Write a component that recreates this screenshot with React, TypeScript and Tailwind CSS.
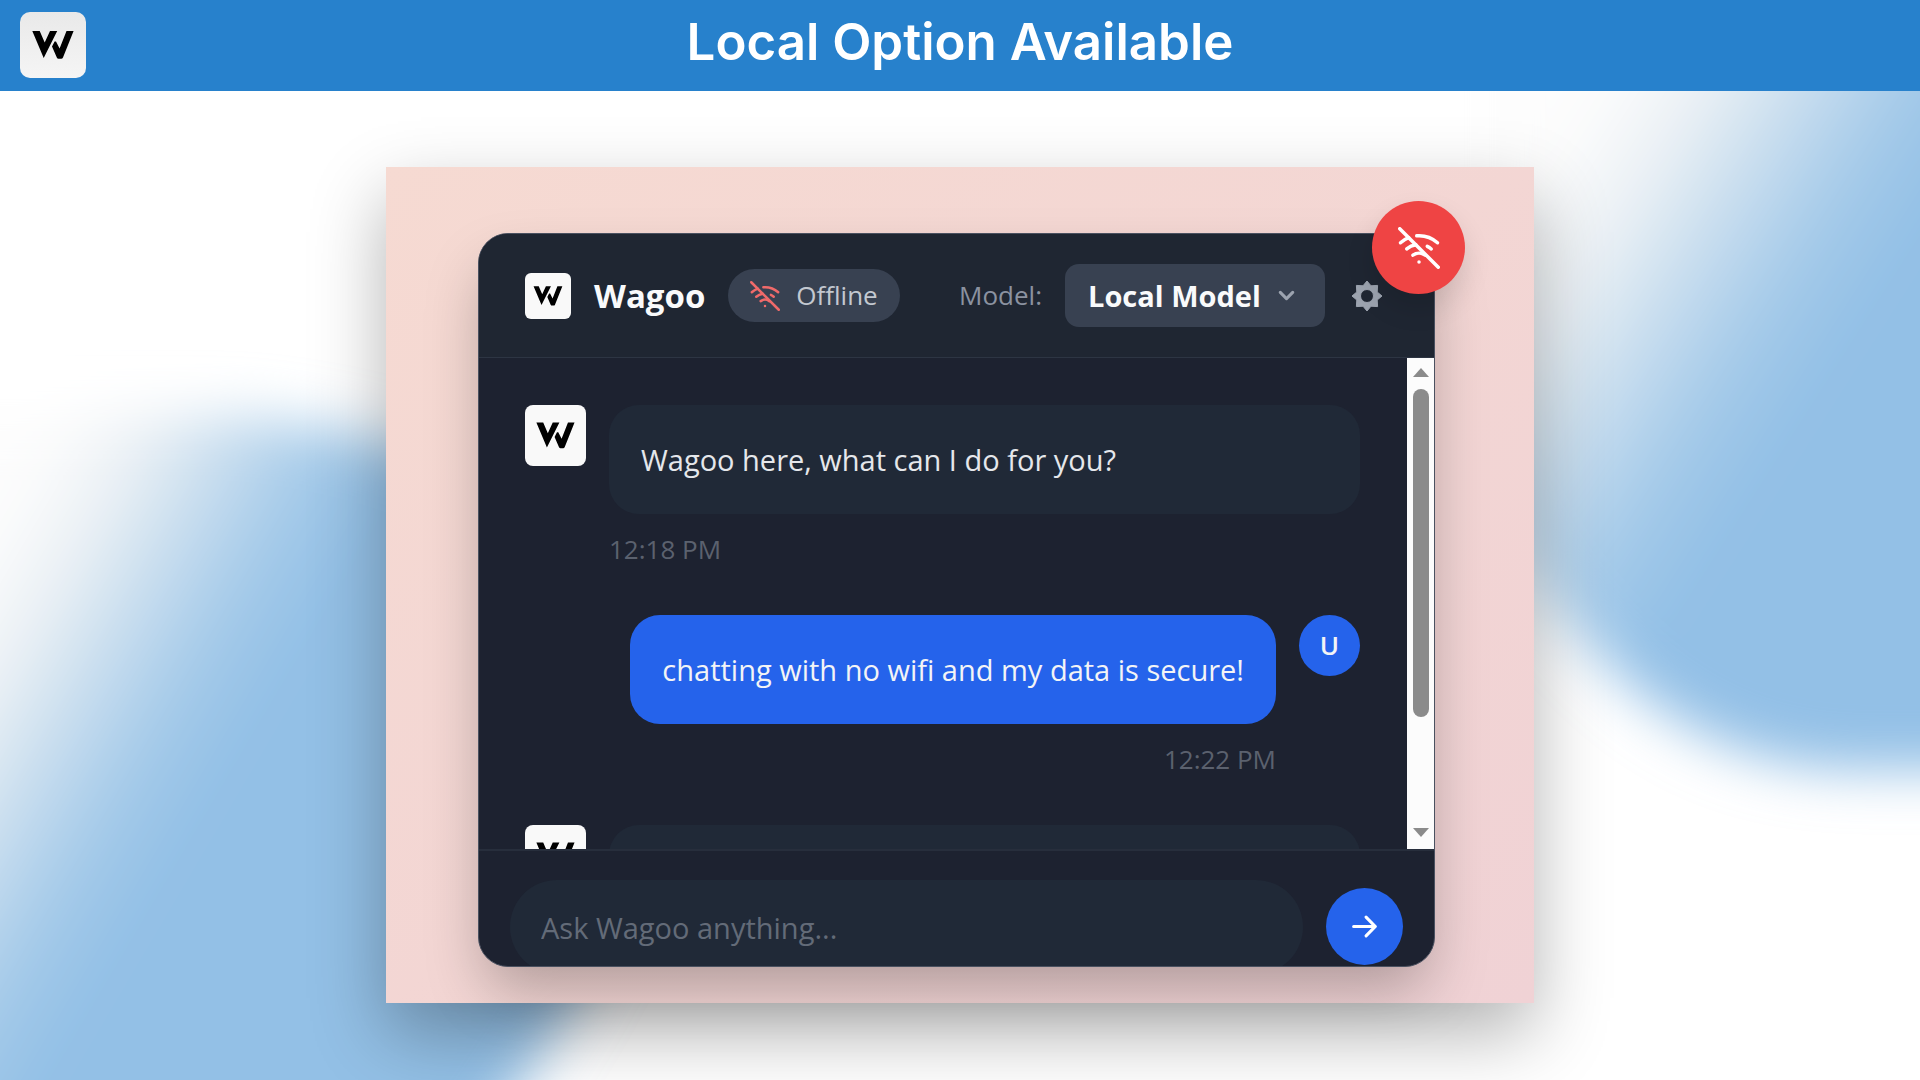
import { useState } from "react";
import type { ReactNode } from "react";
import { FiWifiOff } from "react-icons/fi";
import { HiArrowRight, HiChevronDown } from "react-icons/hi";

interface Message {
  from: "wagoo" | "user";
  text: string;
  time: string;
}

const messages: Message[] = [
  { from: "wagoo", text: "Wagoo here, what can I do for you?", time: "12:18 PM" },
  { from: "user", text: "chatting with no wifi and my data is secure!", time: "12:22 PM" },
  { from: "wagoo", text: "", time: "" },
];

function Logo({ className = "" }: { className?: string }) {
  return (
    <div className={`shrink-0 overflow-hidden ${className}`}>
      <svg viewBox="0 0 66 66" className="h-full w-full" aria-hidden="true">
        <path d="M12.3 19h7.4l5 11.5L30 19h7.2L23.7 46z" />
        <path d="M34.6 29.5H36L39.6 36.5 46.5 19H53.6L43 45.5Q42.4 46.8 41.2 46.8H38.4Q37.4 46.8 36.8 45.6L32 34.5Z" />
      </svg>
    </div>
  );
}

function GearIcon({ className = "" }: { className?: string }) {
  return (
    <svg viewBox="-16 -16 32 32" className={className} fill="currentColor" aria-hidden="true">
      <path
        fillRule="evenodd"
        stroke="currentColor"
        strokeLinejoin="round"
        d="M0-15L4-10.200 10.600-10.600 10.200-4 15 0 10.200 4 10.600 10.600 4 10.200 0 15-4 10.200-10.600 10.600-10.200 4-15 0-10.200-4-10.600-10.600-4-10.200zM0-6.500a6.500 6.500 0 1 0 0 13a6.500 6.500 0 1 0 0-13z"
      />
    </svg>
  );
}

// Soft blue shapes behind the card
function Backdrop() {
  return (
    <svg
      className="absolute inset-0 h-full w-full"
      viewBox="0 91 1920 989"
      preserveAspectRatio="xMidYMid slice"
      aria-hidden="true"
    >
      <defs>
        <linearGradient id="left" gradientUnits="userSpaceOnUse" x1="225" y1="133" x2="500" y2="295">
          <stop offset="0" stopColor="#fdfdfd" />
          <stop offset="0.25" stopColor="#ecf1f5" />
          <stop offset="0.75" stopColor="#a6cbe9" />
          <stop offset="1" stopColor="#93c0e6" />
        </linearGradient>
        <linearGradient id="right" gradientUnits="userSpaceOnUse" x1="1585" y1="105" x2="1875" y2="290">
          <stop offset="0" stopColor="#fdfdfd" />
          <stop offset="0.25" stopColor="#ecf1f5" />
          <stop offset="0.75" stopColor="#a6cbe9" />
          <stop offset="1" stopColor="#93c0e6" />
        </linearGradient>
        <filter id="soft" x="-20%" y="-20%" width="140%" height="140%">
          <feGaussianBlur stdDeviation="27" />
        </filter>
      </defs>
      <path
        d="M-200 415H240Q700 460 640 850Q600 990 410 1240H-200z"
        fill="url(#left)"
        filter="url(#soft)"
      />
      <path
        d="M1480 -100V480Q1620 770 1860 770H2120V-100z"
        fill="url(#right)"
        filter="url(#soft)"
      />
    </svg>
  );
}

function Time({ align, children }: { align: string; children: ReactNode }) {
  return <p className={`mt-[17px] h-9 text-[26px] leading-9 text-[#5b616e] ${align}`}>{children}</p>;
}

function Bubble({ message }: { message: Message }) {
  if (message.from === "user") {
    return (
      <div className="flex items-start justify-end gap-[23px]">
        <div>
          <p className="flex h-[109px] items-center rounded-[30px] bg-[#2563eb] px-8 text-[29px] text-gray-100">
            {message.text}
          </p>
          <Time align="text-right">{message.time}</Time>
        </div>
        <div className="flex size-[61px] shrink-0 items-center justify-center rounded-full bg-[#2563eb] text-[26px] font-semibold text-gray-100">
          U
        </div>
      </div>
    );
  }
  return (
    <div className="flex items-start gap-[23px]">
      <Logo className="size-[61px] rounded-lg bg-[#f9f9f9]" />
      <div className="flex-1">
        <p className="flex h-[109px] items-center rounded-[30px] bg-[#202937] px-8 text-[29px] text-gray-200">
          {message.text}
        </p>
        <Time align="text-left">{message.time}</Time>
      </div>
    </div>
  );
}

function Scrollbar() {
  return (
    <div className="flex w-[27px] shrink-0 flex-col items-center justify-between bg-[#fcfcfc] pt-2.5 pb-3">
      <div className="flex flex-col items-center gap-3">
        <svg className="h-[9px] w-4" viewBox="0 0 16 9" fill="#8b8b8b">
          <path d="M8 0l8 9H0z" />
        </svg>
        <div className="h-[328px] w-4 rounded-full bg-[#8b8b8b]" />
      </div>
      <svg className="h-[9px] w-4" viewBox="0 0 16 9" fill="#8b8b8b">
        <path d="M0 0h16L8 9z" />
      </svg>
    </div>
  );
}

function ChatHeader() {
  return (
    <div className="flex h-[124px] items-center border-b border-[#2d3543] bg-[#1f2632] pr-[51px] pl-[46px]">
      <Logo className="size-[46px] rounded-md bg-[#f9f9f9]" />
      <h2 className="ml-[23px] text-[33px] font-bold text-gray-50">Wagoo</h2>
      <div className="ml-[23px] flex h-[53px] items-center gap-4 rounded-full bg-[#384151] px-[22px] text-[26px] text-[#c3c8d0]">
        <FiWifiOff className="size-[30px] text-[#f06a6a]" />
        Offline
      </div>
      <div className="ml-auto flex items-center">
        <label htmlFor="model" className="text-[26px] text-[#8b92a0]">
          Model:
        </label>
        <div className="relative ml-[23px]">
          <select
            id="model"
            className="h-[63px] w-[260px] appearance-none rounded-[14px] bg-[#384151] pl-[23px] text-[29px] font-bold text-gray-50"
          >
            <option>Local Model</option>
          </select>
          <HiChevronDown className="pointer-events-none absolute top-4 right-[23px] size-[31px] text-[#9ca3af]" />
        </div>
        <button className="ml-[26px] text-[#9ca3af]" aria-label="Settings">
          <GearIcon className="size-8" />
        </button>
      </div>
    </div>
  );
}

export default function App() {
  const [draft, setDraft] = useState("");

  return (
    <div className="flex min-h-screen flex-col overflow-hidden bg-white font-['Open_Sans','Noto_Sans',sans-serif]">
      <header className="relative z-10 grid h-[91px] grid-cols-[1fr_auto_1fr] items-start bg-[#2781cc] px-5 pt-3">
        <Logo className="size-[66px] rounded-[10px] bg-linear-to-b from-[#e9e9e9] to-[#f5f5f5]" />
        <h1 className="text-[51px] leading-[60px] font-semibold text-white font-['Inter',sans-serif]">
          Local Option Available
        </h1>
      </header>

      <main className="relative flex-1 px-5 pt-[76px] pb-[77px]">
        <Backdrop />
        <section className="relative mx-auto max-w-[1148px] bg-linear-to-br from-[#f6dad2] to-[#f0d2d5] pt-[66px] pr-[99px] pb-9 pl-[92px] shadow-[0_30px_70px_rgba(0,0,0,0.3)]">
          <div className="relative">
            <div className="overflow-hidden rounded-[30px] border border-[#4a5160] bg-[#1d2230] shadow-[0_30px_60px_-8px_rgba(0,0,0,0.28)]">
              <ChatHeader />

              <div className="flex h-[491px] overflow-hidden">
                <div className="flex flex-1 flex-col gap-12 pt-[47px] pr-[47px] pl-[46px]">
                  {messages.map((message, i) => (
                    <Bubble key={i} message={message} />
                  ))}
                </div>
                <Scrollbar />
              </div>

              <form
                className="flex h-[117px] items-start gap-[23px] overflow-hidden border-t-2 border-[#272e3c] px-[31px] pt-[29px]"
                onSubmit={(e) => e.preventDefault()}
              >
                <input
                  value={draft}
                  onChange={(e) => setDraft(e.target.value)}
                  placeholder="Ask Wagoo anything..."
                  aria-label="Message"
                  className="h-[94px] min-w-0 flex-1 rounded-full bg-[#202937] px-[31px] text-[29px] text-gray-200 placeholder:text-[#636b78]"
                />
                <button
                  aria-label="Send"
                  className="mt-2 flex size-[77px] shrink-0 items-center justify-center rounded-full bg-[#2563eb] text-white"
                >
                  <HiArrowRight className="size-[31px]" />
                </button>
              </form>
            </div>

            <div className="absolute -top-8 -right-[30px] flex size-[93px] items-center justify-center rounded-full bg-[#ef4444] text-white shadow-[0_14px_28px_rgba(0,0,0,0.12)]">
              <FiWifiOff className="size-[42px]" />
            </div>
          </div>
        </section>
      </main>
    </div>
  );
}
